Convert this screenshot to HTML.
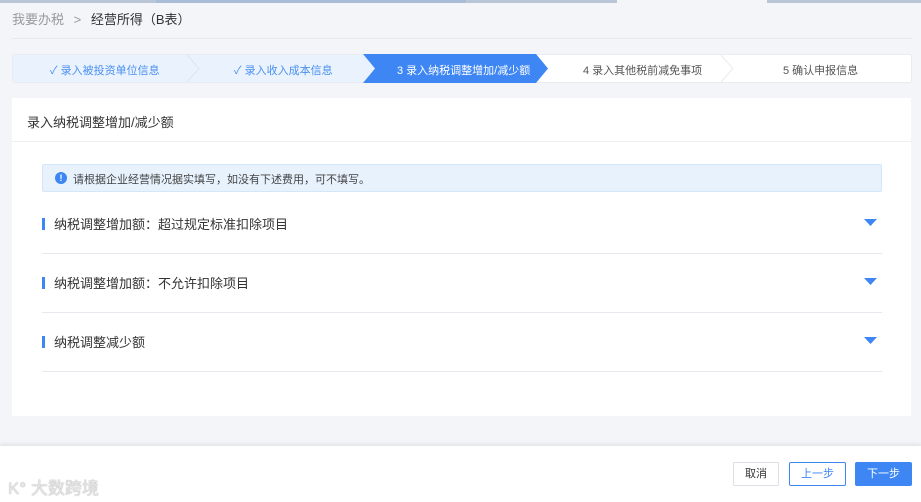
<!DOCTYPE html>
<html><head><meta charset="utf-8"><style>
*{margin:0;padding:0;box-sizing:border-box}
body{width:921px;height:502px;background:#f4f5f9;font-family:"Liberation Sans","Noto Sans CJK SC",sans-serif;position:relative;overflow:hidden;color:#333}
.abs{position:absolute}
.t{font-size:12px;white-space:nowrap}
</style></head><body>
<div class="abs" style="left:0;top:0;width:921px;height:3px;background:#b8c6d8"></div>
<div class="abs" style="left:156px;top:0;width:310px;height:3px;background:#a9bdd6"></div>
<div class="abs" style="left:617px;top:0;width:150px;height:3px;background:#f4f5f9"></div>
<div class="abs t" style="left:12px;top:9px;font-size:13px;color:#999">我要办税 <span style="margin:0 6px">&gt;</span> <span style="color:#333">经营所得（B表）</span></div>
<div class="abs" style="left:12px;top:38px;width:900px;height:1px;background:#e6e8ee"></div>
<svg class="abs" style="left:12px;top:54px" width="900" height="29">
<rect x="0.5" y="0.5" width="899" height="28" rx="2" fill="#fff" stroke="#e8ebf0"/>
<path d="M1 1 H175 L187 14.5 L175 28 H1 Z" fill="#eaf3fd"/>
<path d="M175 1 H352 L364 14.5 L352 28 H187 L175 28 L187 14.5 Z" fill="#eaf3fd"/>
<path d="M175 1 L187 14.5 L175 28" fill="none" stroke="#dde6f0"/>
<path d="M351 0 H524 L536 14.5 L524 29 H351 L363 14.5 Z" fill="#3d86f4"/>
<path d="M709 1 L721 14.5 L709 28" fill="none" stroke="#e8ebf0"/>
</svg>
<div class="abs t" style="left:50px;top:62px;color:#4a8ff0;font-size:11px">✓ 录入被投资单位信息</div>
<div class="abs t" style="left:234px;top:62px;color:#4a8ff0;font-size:11px">✓ 录入收入成本信息</div>
<div class="abs t" style="left:397px;top:62px;color:#fff;font-size:11px">3 录入纳税调整增加/减少额</div>
<div class="abs t" style="left:583px;top:62px;color:#555;font-size:11px">4 录入其他税前减免事项</div>
<div class="abs t" style="left:783px;top:62px;color:#555;font-size:11px">5 确认申报信息</div>
<div class="abs" style="left:12px;top:98px;width:899px;height:318px;background:#fff"></div>
<div class="abs t" style="left:27px;top:112px;font-size:13px">录入纳税调整增加/减少额</div>
<div class="abs" style="left:12px;top:141px;width:899px;height:1px;background:#eceef2"></div>
<div class="abs" style="left:42px;top:164px;width:840px;height:28px;background:#e8f2fd;border:1px solid #d6e6fa;border-radius:2px"></div>
<div class="abs" style="left:55px;top:172px;width:12px;height:12px;border-radius:50%;background:#3d86f4;color:#fff;font-size:9px;line-height:12px;text-align:center;font-weight:bold">!</div>
<div class="abs t" style="left:73px;top:171px;font-size:11px;color:#444">请根据企业经营情况据实填写，如没有下述费用，可不填写。</div>
<div class="abs" style="left:42px;top:218px;width:3px;height:12px;background:#3d86f4"></div>
<div class="abs t" style="left:54px;top:214px;font-size:13px">纳税调整增加额：超过规定标准扣除项目</div>
<div class="abs" style="left:42px;top:253px;width:840px;height:1px;background:#e6e8ee"></div>
<div class="abs" style="left:42px;top:277px;width:3px;height:12px;background:#3d86f4"></div>
<div class="abs t" style="left:54px;top:273px;font-size:13px">纳税调整增加额：不允许扣除项目</div>
<div class="abs" style="left:42px;top:312px;width:840px;height:1px;background:#e6e8ee"></div>
<div class="abs" style="left:42px;top:336px;width:3px;height:12px;background:#3d86f4"></div>
<div class="abs t" style="left:54px;top:332px;font-size:13px">纳税调整减少额</div>
<div class="abs" style="left:42px;top:371px;width:840px;height:1px;background:#e6e8ee"></div>
<svg class="abs" style="left:864px;top:218px" width="14" height="130">
<path d="M0 1 H13 L6.5 8 Z" fill="#3d86f4"/>
<path d="M0 60 H13 L6.5 67 Z" fill="#3d86f4"/>
<path d="M0 119 H13 L6.5 126 Z" fill="#3d86f4"/>
</svg>
<div class="abs" style="left:0;top:446px;width:921px;height:56px;background:#fff;box-shadow:0 -2px 4px rgba(0,0,0,0.08)"></div>
<div class="abs t" style="left:8px;top:474px;font-size:17px;color:#e4e4e4;text-shadow:0 0 1px #888">K° 大数跨境</div>
<div class="abs t" style="left:733px;top:462px;width:46px;height:24px;border:1px solid #dcdfe6;border-radius:2px;text-align:center;line-height:22px;font-size:11px">取消</div>
<div class="abs t" style="left:789px;top:462px;width:57px;height:24px;border:1px solid #3d86f4;border-radius:2px;text-align:center;line-height:22px;font-size:11px;color:#3d86f4">上一步</div>
<div class="abs t" style="left:855px;top:462px;width:57px;height:24px;background:#3d86f4;border-radius:2px;text-align:center;line-height:24px;font-size:11px;color:#fff">下一步</div>
</body></html>
